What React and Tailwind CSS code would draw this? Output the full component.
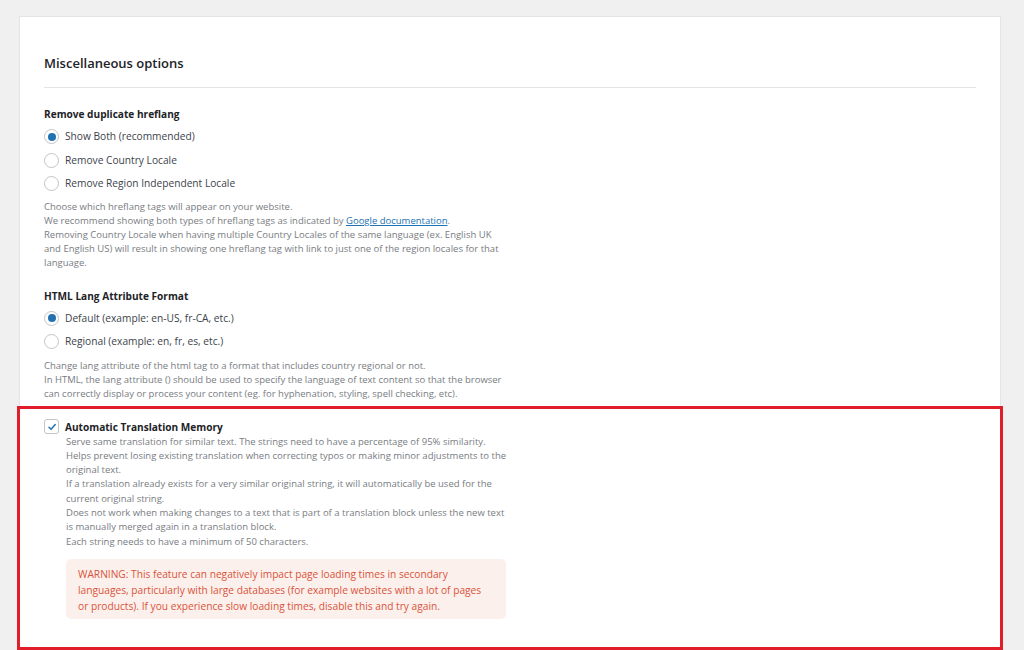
import React from "react";

const font = { fontFamily: '"Open Sans", "Noto Sans", sans-serif' };

const Radio = ({ checked, label }) => (
  <label className="flex items-center h-[23.5px] gap-[6px] text-[10.2px] text-[#3c434a]">
    <span className="w-[15px] h-[15px] rounded-full border border-[#c3c4c7] bg-white flex items-center justify-center shrink-0">
      {checked && <span className="w-[8px] h-[8px] rounded-full bg-[#2271b1]"></span>}
    </span>
    <span>{label}</span>
  </label>
);

const App = () => {
  return (
    <div className="min-h-[650px] h-[650px] overflow-hidden bg-[#f0f0f1] pt-[16px] pl-[19px] pr-[23px]" style={font}>
      <div className="bg-white border border-[#e2e4e7] border-b-0 h-full">
        <div className="px-[24px]">
          <h2 className="pt-[36px] pb-[14px] text-[13px] leading-[20px] font-semibold text-[#1d2327] border-b border-[#e2e4e7]">
            Miscellaneous options
          </h2>

          <div className="mt-[18px] text-[10.1px] leading-[16px] font-bold text-[#1d2327]">Remove duplicate hreflang</div>
          <div className="mt-[3px] flex flex-col">
            <Radio checked label="Show Both (recommended)" />
            <Radio label="Remove Country Locale" />
            <Radio label="Remove Region Independent Locale" />
          </div>
          <p className="mt-[4px] w-[480px] whitespace-nowrap text-[9.5px] leading-[14px] text-[#787c82]">
            Choose which hreflang tags will appear on your website.
            <br />
            We recommend showing both types of hreflang tags as indicated by{" "}
            <a className="text-[#2271b1] underline">Google documentation</a>.
            <br />
            Removing Country Locale when having multiple Country Locales of the same language (ex. English UK
            <br />
            and English US) will result in showing one hreflang tag with link to just one of the region locales for that
            <br />
            language.
          </p>

          <div className="mt-[18px] text-[10.1px] leading-[16px] font-bold text-[#1d2327]">HTML Lang Attribute Format</div>
          <div className="mt-[3px] flex flex-col">
            <Radio checked label="Default (example: en-US, fr-CA, etc.)" />
            <Radio label="Regional (example: en, fr, es, etc.)" />
          </div>
          <p className="mt-[5px] w-[480px] whitespace-nowrap text-[9.5px] leading-[14px] text-[#787c82]">
            Change lang attribute of the html tag to a format that includes country regional or not.
            <br />
            In HTML, the lang attribute () should be used to specify the language of text content so that the browser
            <br />
            can correctly display or process your content (eg. for hyphenation, styling, spell checking, etc).
          </p>
        </div>

        <div className="mt-[5px] -mx-[3px] border-[3px] border-[#e11d2b] pt-[10px] pb-[28px] pl-[24px]">
          <div className="flex items-center gap-[6px] h-[16px]">
            <span className="w-[15px] h-[15px] rounded-[3px] border border-[#c3c4c7] flex items-center justify-center shrink-0">
              <svg width="10" height="10" viewBox="0 0 10 10" fill="none">
                <path d="M2 5.2 L4.1 7.3 L8.2 2.6" stroke="#2271b1" strokeWidth="1.5" strokeLinecap="round" strokeLinejoin="round" />
              </svg>
            </span>
            <span className="text-[10.1px] leading-[16px] font-bold text-[#1d2327]">Automatic Translation Memory</span>
          </div>
          <div className="ml-[22px] w-[440px]">
            <p className="whitespace-nowrap text-[9.5px] leading-[14.3px] text-[#787c82]">
              Serve same translation for similar text. The strings need to have a percentage of 95% similarity.
              <br />
              Helps prevent losing existing translation when correcting typos or making minor adjustments to the
              <br />
              original text.
              <br />
              If a translation already exists for a very similar original string, it will automatically be used for the
              <br />
              current original string.
              <br />
              Does not work when making changes to a text that is part of a translation block unless the new text
              <br />
              is manually merged again in a translation block.
              <br />
              Each string needs to have a minimum of 50 characters.
            </p>
            <div className="mt-[10px] rounded-[5px] bg-[#fcf0ec] pl-[12px] pr-[10px] pt-[7px] pb-[5px] whitespace-nowrap text-[10.2px] leading-[16px] text-[#d9533a]">
              WARNING: This feature can negatively impact page loading times in secondary
              <br />
              languages, particularly with large databases (for example websites with a lot of pages
              <br />
              or products). If you experience slow loading times, disable this and try again.
            </div>
          </div>
        </div>
      </div>
    </div>
  );
};

export default App;
